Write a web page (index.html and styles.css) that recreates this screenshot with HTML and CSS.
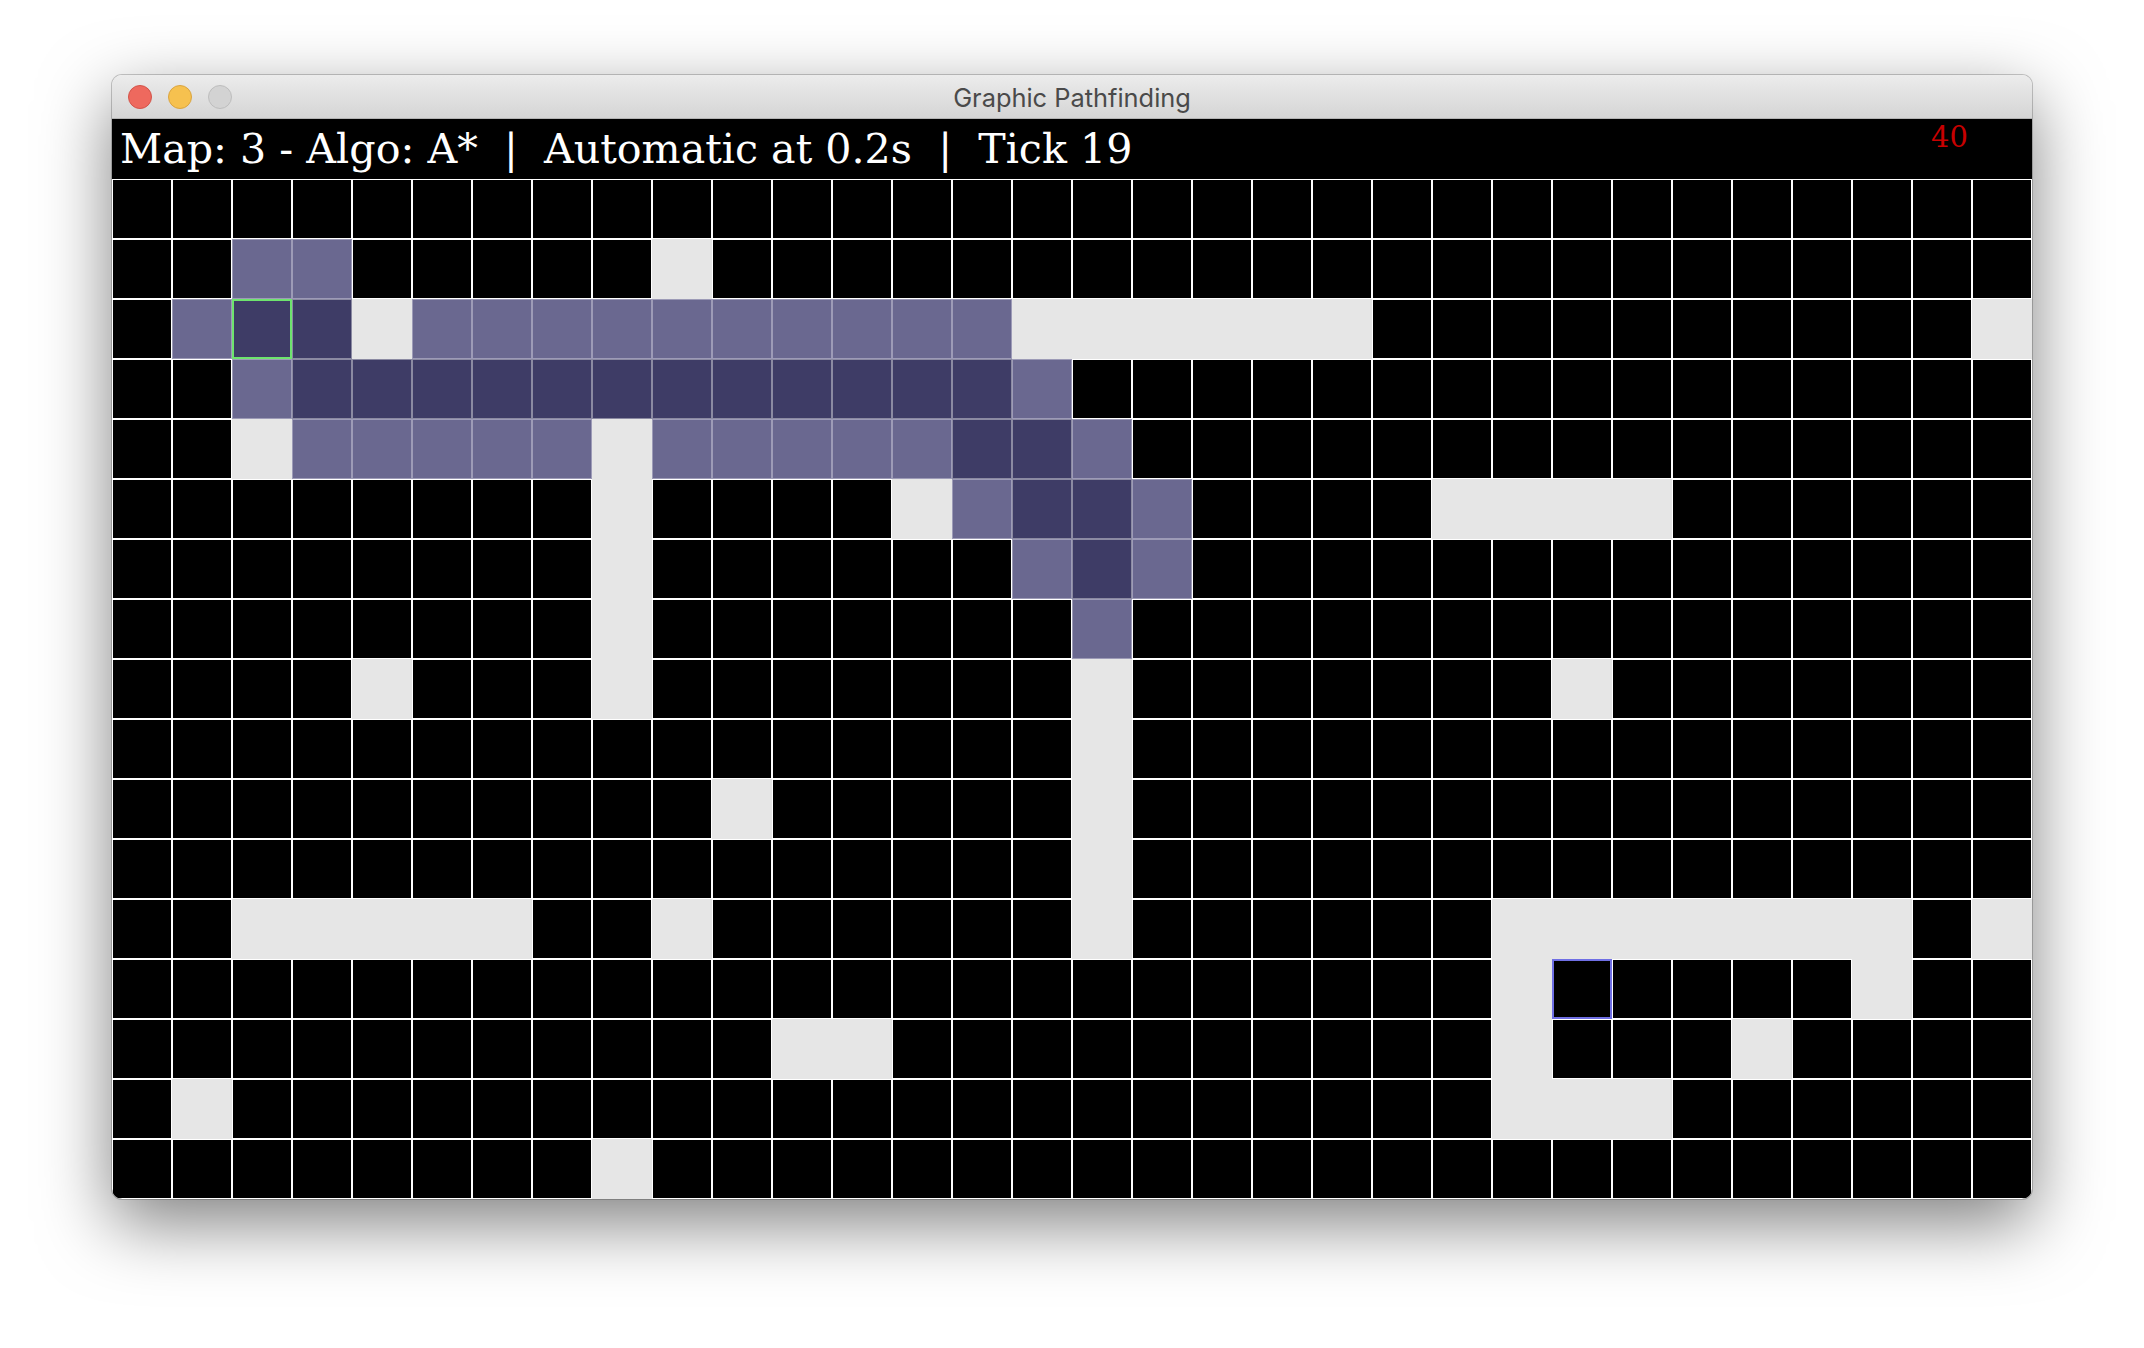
FILE: index.html
```html
<!DOCTYPE html>
<html>
<head>
<meta charset="utf-8">
<title>Graphic Pathfinding</title>
<link rel="stylesheet" href="styles.css">
</head>
<body>
<div class="window">
  <div class="titlebar">
    <div class="lights">
      <span class="light red"></span>
      <span class="light yellow"></span>
      <span class="light grey"></span>
    </div>
    <div class="title">Graphic Pathfinding</div>
    <div class="spacer"></div>
  </div>
  <div class="header">
    <div class="status">Map: 3 - Algo: A*  |  Automatic at 0.2s  |  Tick 19</div>
    <div class="fps">40</div>
  </div>
  <div class="board">
<i></i><i></i><i></i><i></i><i></i><i></i><i></i><i></i><i></i><i></i><i></i><i></i><i></i><i></i><i></i><i></i><i></i><i></i><i></i><i></i><i></i><i></i><i></i><i></i><i></i><i></i><i></i><i></i><i></i><i></i><i></i><i></i>
<i></i><i></i><i class="v"></i><i class="v"></i><i></i><i></i><i></i><i></i><i></i><i class="w"></i><i></i><i></i><i></i><i></i><i></i><i></i><i></i><i></i><i></i><i></i><i></i><i></i><i></i><i></i><i></i><i></i><i></i><i></i><i></i><i></i><i></i><i></i>
<i></i><i class="v"></i><i class="p s"></i><i class="p"></i><i class="w"></i><i class="v"></i><i class="v"></i><i class="v"></i><i class="v"></i><i class="v"></i><i class="v"></i><i class="v"></i><i class="v"></i><i class="v"></i><i class="v"></i><i class="w"></i><i class="w"></i><i class="w"></i><i class="w"></i><i class="w"></i><i class="w"></i><i></i><i></i><i></i><i></i><i></i><i></i><i></i><i></i><i></i><i></i><i class="w"></i>
<i></i><i></i><i class="v"></i><i class="p"></i><i class="p"></i><i class="p"></i><i class="p"></i><i class="p"></i><i class="p"></i><i class="p"></i><i class="p"></i><i class="p"></i><i class="p"></i><i class="p"></i><i class="p"></i><i class="v"></i><i></i><i></i><i></i><i></i><i></i><i></i><i></i><i></i><i></i><i></i><i></i><i></i><i></i><i></i><i></i><i></i>
<i></i><i></i><i class="w"></i><i class="v"></i><i class="v"></i><i class="v"></i><i class="v"></i><i class="v"></i><i class="w"></i><i class="v"></i><i class="v"></i><i class="v"></i><i class="v"></i><i class="v"></i><i class="p"></i><i class="p"></i><i class="v"></i><i></i><i></i><i></i><i></i><i></i><i></i><i></i><i></i><i></i><i></i><i></i><i></i><i></i><i></i><i></i>
<i></i><i></i><i></i><i></i><i></i><i></i><i></i><i></i><i class="w"></i><i></i><i></i><i></i><i></i><i class="w"></i><i class="v"></i><i class="p"></i><i class="p"></i><i class="v"></i><i></i><i></i><i></i><i></i><i class="w"></i><i class="w"></i><i class="w"></i><i class="w"></i><i></i><i></i><i></i><i></i><i></i><i></i>
<i></i><i></i><i></i><i></i><i></i><i></i><i></i><i></i><i class="w"></i><i></i><i></i><i></i><i></i><i></i><i></i><i class="v"></i><i class="p"></i><i class="v"></i><i></i><i></i><i></i><i></i><i></i><i></i><i></i><i></i><i></i><i></i><i></i><i></i><i></i><i></i>
<i></i><i></i><i></i><i></i><i></i><i></i><i></i><i></i><i class="w"></i><i></i><i></i><i></i><i></i><i></i><i></i><i></i><i class="v"></i><i></i><i></i><i></i><i></i><i></i><i></i><i></i><i></i><i></i><i></i><i></i><i></i><i></i><i></i><i></i>
<i></i><i></i><i></i><i></i><i class="w"></i><i></i><i></i><i></i><i class="w"></i><i></i><i></i><i></i><i></i><i></i><i></i><i></i><i class="w"></i><i></i><i></i><i></i><i></i><i></i><i></i><i></i><i class="w"></i><i></i><i></i><i></i><i></i><i></i><i></i><i></i>
<i></i><i></i><i></i><i></i><i></i><i></i><i></i><i></i><i></i><i></i><i></i><i></i><i></i><i></i><i></i><i></i><i class="w"></i><i></i><i></i><i></i><i></i><i></i><i></i><i></i><i></i><i></i><i></i><i></i><i></i><i></i><i></i><i></i>
<i></i><i></i><i></i><i></i><i></i><i></i><i></i><i></i><i></i><i></i><i class="w"></i><i></i><i></i><i></i><i></i><i></i><i class="w"></i><i></i><i></i><i></i><i></i><i></i><i></i><i></i><i></i><i></i><i></i><i></i><i></i><i></i><i></i><i></i>
<i></i><i></i><i></i><i></i><i></i><i></i><i></i><i></i><i></i><i></i><i></i><i></i><i></i><i></i><i></i><i></i><i class="w"></i><i></i><i></i><i></i><i></i><i></i><i></i><i></i><i></i><i></i><i></i><i></i><i></i><i></i><i></i><i></i>
<i></i><i></i><i class="w"></i><i class="w"></i><i class="w"></i><i class="w"></i><i class="w"></i><i></i><i></i><i class="w"></i><i></i><i></i><i></i><i></i><i></i><i></i><i class="w"></i><i></i><i></i><i></i><i></i><i></i><i></i><i class="w"></i><i class="w"></i><i class="w"></i><i class="w"></i><i class="w"></i><i class="w"></i><i class="w"></i><i></i><i class="w"></i>
<i></i><i></i><i></i><i></i><i></i><i></i><i></i><i></i><i></i><i></i><i></i><i></i><i></i><i></i><i></i><i></i><i></i><i></i><i></i><i></i><i></i><i></i><i></i><i class="w"></i><i class="t"></i><i></i><i></i><i></i><i></i><i class="w"></i><i></i><i></i>
<i></i><i></i><i></i><i></i><i></i><i></i><i></i><i></i><i></i><i></i><i></i><i class="w"></i><i class="w"></i><i></i><i></i><i></i><i></i><i></i><i></i><i></i><i></i><i></i><i></i><i class="w"></i><i></i><i></i><i></i><i class="w"></i><i></i><i></i><i></i><i></i>
<i></i><i class="w"></i><i></i><i></i><i></i><i></i><i></i><i></i><i></i><i></i><i></i><i></i><i></i><i></i><i></i><i></i><i></i><i></i><i></i><i></i><i></i><i></i><i></i><i class="w"></i><i class="w"></i><i class="w"></i><i></i><i></i><i></i><i></i><i></i><i></i>
<i></i><i></i><i></i><i></i><i></i><i></i><i></i><i></i><i class="w"></i><i></i><i></i><i></i><i></i><i></i><i></i><i></i><i></i><i></i><i></i><i></i><i></i><i></i><i></i><i></i><i></i><i></i><i></i><i></i><i></i><i></i><i></i><i></i>
  </div>
</div>
</body>
</html>
```
FILE: styles.css
```css
html, body {
  margin: 0;
  padding: 0;
}
body {
  background: #ffffff;
  width: 2144px;
  height: 1348px;
  overflow: hidden;
}
.window {
  margin: 75px 0 0 112px;
  width: 1920px;
  border-radius: 10px;
  overflow: hidden;
  box-shadow: 0 0 0 1px rgba(0, 0, 0, 0.2), 0 24px 70px rgba(0, 0, 0, 0.5);
}
.titlebar {
  height: 44px;
  box-sizing: border-box;
  border-bottom: 1px solid #b3b3b3;
  background: linear-gradient(#ececec, #d5d5d5);
  display: grid;
  grid-template-columns: 1fr auto 1fr;
  align-items: center;
}
.lights {
  display: flex;
  gap: 16px;
  padding-left: 16px;
}
.light {
  width: 24px;
  height: 24px;
  border-radius: 50%;
  box-sizing: border-box;
  border: 1px solid;
}
.red { background: #ee695e; border-color: #d2544a; }
.yellow { background: #f6c14f; border-color: #d9a440; }
.grey { background: #d3d3d3; border-color: #bdbdbd; }
.title {
  font-family: "Inter", "Liberation Sans", sans-serif;
  font-size: 25.4px;
  color: #4a4a4a;
  padding-top: 2px;
}
.header {
  height: 60px;
  background: #000;
  display: flex;
  justify-content: space-between;
  align-items: flex-start;
}
.status {
  font-family: "DejaVu Serif", serif;
  font-size: 41.2px;
  line-height: 60px;
  color: #fff;
  white-space: pre;
  padding-left: 8px;
}
.fps {
  font-family: "DejaVu Serif", serif;
  font-size: 29px;
  line-height: 29px;
  color: #c80000;
  margin: 4px 64px 0 0;
}
.board {
  display: grid;
  grid-template-columns: repeat(32, 60px);
  grid-template-rows: repeat(17, 60px);
  background: #fff;
}
.board i {
  display: block;
  box-sizing: border-box;
  border: 1px solid #fff;
  background: #000;
}
.board .w {
  background: #e6e6e6;
  border-color: #e6e6e6;
}
.board .v {
  background: #6a6890;
  border-color: #9d9bb7;
}
.board .p {
  background: #3e3c66;
  border-color: #8b8aa2;
}
.board .s {
  border: 2px solid #6ee46e;
}
.board .t {
  border: 2px solid #6f6fe4;
}
```
